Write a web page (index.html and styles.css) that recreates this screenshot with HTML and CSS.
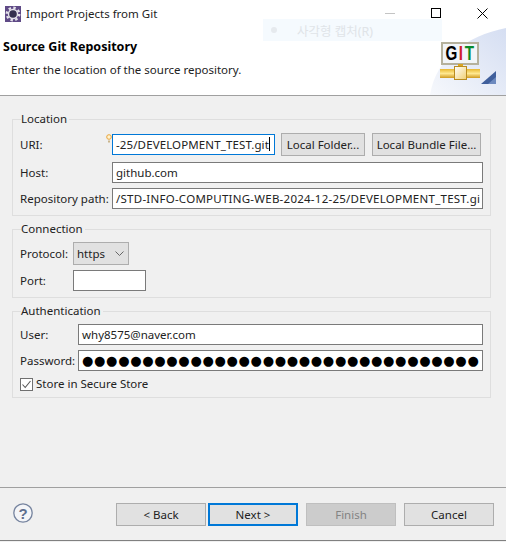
FILE: index.html
```html
<!DOCTYPE html>
<html lang="en">
<head>
    <meta charset="UTF-8">
    <title>Import Projects from Git</title>
    <link rel="stylesheet" href="styles.css">
</head>
<body>
    <div class="window">
        <div class="titlebar">
            <svg class="app-icon" width="16" height="16" viewBox="0 0 16 16">
                <rect width="16" height="16" fill="#5f4a86"/>
                <circle cx="8" cy="8" r="6.2" fill="none" stroke="#e4e2ea" stroke-width="2.4" stroke-dasharray="2.4 2.4"/>
                <circle cx="8" cy="8" r="5.2" fill="#e4e2ea"/>
                <circle cx="8" cy="8" r="3.8" fill="#35304f"/>
            </svg>
            <span class="title">Import Projects from Git</span>
            <div class="win-controls">
                <svg width="11" height="11" viewBox="0 0 11 11"><path d="M0 5.5H10" stroke="#c4c4c4"/></svg>
                <svg width="11" height="11" viewBox="0 0 11 11"><rect x=".5" y=".5" width="9" height="9" fill="none" stroke="#000"/></svg>
                <svg width="11" height="11" viewBox="0 0 11 11"><path d="M.5 .5L10.500 10.500M10.500 .5L.5 10.500" stroke="#000"/></svg>
            </div>
            <div class="capture-hint">
                <span class="capture-dot"></span>
                <span class="capture-label">사각형 캡처(R)</span>
            </div>
        </div>

        <div class="banner">
            <svg class="banner-art" width="80" height="67" viewBox="0 0 80 67">
                <defs>
                    <linearGradient id="sweep" x1="0" y1="1" x2="1" y2="0">
                        <stop offset="0" stop-color="#f6f8fc"/>
                        <stop offset="1" stop-color="#d5def2"/>
                    </linearGradient>
                    <linearGradient id="pipe" x1="0" y1="0" x2="0" y2="1">
                        <stop offset="0" stop-color="#e8b830"/>
                        <stop offset=".5" stop-color="#ffe890"/>
                        <stop offset="1" stop-color="#d09a20"/>
                    </linearGradient>
                    <linearGradient id="joint" x1="0" y1="0" x2="1" y2="1">
                        <stop offset="0" stop-color="#ffffff"/>
                        <stop offset="1" stop-color="#f0cf70"/>
                    </linearGradient>
                </defs>
                <path d="M4 67C10 30 40 8 80 0V67Z" fill="url(#sweep)"/>
                <rect x="16" y="15" width="36" height="21" fill="#f2f5f8" stroke="#b5b19c" stroke-width="2"/>
                <text class="git-text" transform="scale(.76 1)" y="32.500"><tspan x="25.700" fill="#000">G</tspan><tspan x="43.200" fill="#d0202a">I</tspan><tspan x="51" fill="#0a8a2a">T</tspan></text>
                <rect x="32" y="36" width="5" height="3" fill="#d9a520"/>
                <rect x="14" y="41" width="40" height="9" fill="url(#pipe)"/>
                <rect x="28.500" y="38.500" width="12" height="13" fill="url(#joint)" stroke="#b98c20"/>
                <path d="M55 56L70 43V56Z" fill="#3f5f9c"/>
                <path d="M62 56L70 49V56Z" fill="#6d8abf"/>
            </svg>
            <h1>Source Git Repository</h1>
            <p>Enter the location of the source repository.</p>
        </div>

        <div class="content">
            <fieldset class="location">
                <legend>Location</legend>
                <div class="row uri-row">
                    <label class="label-wide">URI:</label>
                    <span class="hint-bulb">
                        <svg width="6" height="9" viewBox="0 0 6 9"><circle cx="3" cy="3" r="2.300" fill="#fff3d0" stroke="#e8a33a"/><path d="M2 6.500H4V8.500H2Z" fill="#c9b48a"/></svg>
                    </span>
                    <div class="field focused uri-field">-25/DEVELOPMENT_TEST.git<span class="caret"></span></div>
                    <button class="btn folder-btn">Local Folder...</button>
                    <button class="btn bundle-btn">Local Bundle File...</button>
                </div>
                <div class="row host-row">
                    <label class="label-wide">Host:</label>
                    <div class="field grow">github.com</div>
                </div>
                <div class="row">
                    <label class="label-wide">Repository path:</label>
                    <div class="field grow path-field">/STD-INFO-COMPUTING-WEB-2024-12-25/DEVELOPMENT_TEST.gi</div>
                </div>
            </fieldset>

            <fieldset class="connection">
                <legend>Connection</legend>
                <div class="row">
                    <label class="label-short">Protocol:</label>
                    <div class="select">https
                        <svg width="9" height="5" viewBox="0 0 9 5"><path d="M.5 .5L4.500 4.500L8.500 .5" fill="none" stroke="#666"/></svg>
                    </div>
                </div>
                <div class="row">
                    <label class="label-short">Port:</label>
                    <div class="field port-field"></div>
                </div>
            </fieldset>

            <fieldset class="auth">
                <legend>Authentication</legend>
                <div class="row">
                    <label class="label-auth">User:</label>
                    <div class="field grow">why8575@naver.com</div>
                </div>
                <div class="row">
                    <label class="label-auth">Password:</label>
                    <div class="field grow dots">●●●●●●●●●●●●●●●●●●●●●●●●●●●●●●●●●</div>
                </div>
                <div class="check-row">
                    <svg width="13" height="13" viewBox="0 0 13 13"><rect x=".5" y=".5" width="12" height="12" fill="#fff" stroke="#707070"/><path d="M2.500 6.500L5.200 9.500L10.500 3" fill="none" stroke="#555" stroke-width="1.100"/></svg>
                    <span class="check-label">Store in Secure Store</span>
                </div>
            </fieldset>
        </div>

        <div class="footer">
            <svg class="help" width="20" height="20" viewBox="0 0 20 20">
                <circle cx="10" cy="10" r="9.200" fill="#f4f5f8" stroke="#76849f" stroke-width="1.300"/>
                <text class="help-mark" x="10" y="15.500">?</text>
            </svg>
            <div class="actions">
                <button class="btn wizard-btn">&lt; Back</button>
                <button class="btn wizard-btn default-btn">Next &gt;</button>
                <button class="btn wizard-btn finish-btn" disabled>Finish</button>
                <button class="btn wizard-btn">Cancel</button>
            </div>
        </div>
    </div>
</body>
</html>
```

FILE: styles.css
```css
body {
    margin: 0;
    font-family: "Noto Sans", "Noto Sans CJK KR", sans-serif;
    font-size: 11.5px;
    color: #000;
    background: #f0f0f0;
}

.window {
    width: 506px;
    height: 542px;
    display: flex;
    flex-direction: column;
    overflow: hidden;
}

/* title bar */
.titlebar {
    position: relative;
    z-index: 1;
    height: 28px;
    box-sizing: border-box;
    display: flex;
    align-items: center;
    padding: 0 0 1px 5px;
    background: #fff;
}

.app-icon {
    margin-right: 5px;
}

.title {
    flex: 1;
    color: #222;
}

.win-controls {
    display: flex;
    gap: 35px;
    padding-right: 18px;
}

.capture-hint {
    position: absolute;
    left: 263px;
    top: 19px;
    width: 179px;
    height: 22px;
    display: flex;
    align-items: center;
    background: #f5fafe;
}

.capture-dot {
    width: 6px;
    height: 6px;
    margin: 0 20px 0 8px;
    border-radius: 50%;
    background: #e6eaee;
}

.capture-label {
    font-size: 12.5px;
    color: #e0e4e8;
}

/* banner */
.banner {
    position: relative;
    height: 67px;
    background: #fff;
    border-bottom: 1px solid #a0a0a0;
}

.banner-art {
    position: absolute;
    right: 0;
    top: 0;
}

.git-text {
    font-family: "Liberation Sans", sans-serif;
    font-weight: bold;
    font-size: 20px;
}

.banner h1 {
    margin: 0;
    padding: 11px 0 0 3px;
    font-size: 12.5px;
    line-height: 16px;
    font-weight: bold;
}

.banner p {
    margin: 7px 0 0 11px;
    line-height: 16px;
    color: #222;
}

/* form groups */
.content {
    flex: 1;
    padding: 15px 15px 0 12px;
}

fieldset {
    min-width: 0;
    margin: 0 0 5px;
    padding: 0 7px 6px;
    border: 1px solid #dedede;
}

legend {
    margin-left: 1px;
    padding: 0 2px 0 0;
    line-height: 16px;
    color: #222;
}

.row {
    display: flex;
    align-items: center;
    margin-top: 5px;
    color: #222;
    white-space: nowrap;
}

.uri-row {
    position: relative;
    margin-top: 6px;
}

.host-row {
    margin-top: 6px;
}

.label-wide {
    width: 92px;
    flex: none;
}

.label-short {
    width: 53px;
    flex: none;
}

.label-auth {
    width: 58px;
    flex: none;
}

.hint-bulb {
    position: absolute;
    left: 86px;
    top: 1px;
    line-height: 0;
}

.field {
    height: 21px;
    box-sizing: border-box;
    padding: 0 3px;
    border: 1px solid #7a7a7a;
    background: #fff;
    line-height: 19px;
    color: #222;
    white-space: nowrap;
    overflow: hidden;
}

.grow {
    flex: 1;
    min-width: 0;
}

.uri-field {
    width: 163px;
    margin-right: 6px;
    letter-spacing: 0.12px;
}

.path-field {
    letter-spacing: 0.25px;
}

.focused {
    border-color: #0078d7;
}

.caret {
    display: inline-block;
    width: 1px;
    height: 14px;
    vertical-align: -2px;
    background: #000;
}

.port-field {
    width: 73px;
}

.dots {
    padding-left: 3px;
    padding-right: 0;
    font-family: "DejaVu Sans", sans-serif;
    font-size: 13px;
    letter-spacing: 0.7px;
    color: #000;
}

.btn {
    height: 23px;
    padding: 0;
    box-sizing: border-box;
    border: 1px solid #adadad;
    background: #e1e1e1;
    font: inherit;
    color: #222;
}

.folder-btn {
    width: 84px;
    margin-right: 7px;
}

.bundle-btn {
    width: 109px;
}

.select {
    width: 56px;
    height: 23px;
    box-sizing: border-box;
    padding: 0 4px 0 3px;
    display: flex;
    align-items: center;
    justify-content: space-between;
    border: 1px solid #adadad;
    background: #e1e1e1;
}

.check-row {
    display: flex;
    align-items: center;
    gap: 3px;
    margin-top: 7px;
    height: 13px;
    color: #222;
}

.check-label {
    margin-top: -2px;
}

/* footer */
.footer {
    height: 54px;
    box-sizing: border-box;
    display: flex;
    justify-content: space-between;
    padding: 15px 12px 0 13px;
    border-top: 1px solid #a0a0a0;
    border-bottom: 1px solid #808080;
    margin-bottom: 1px;
}

.help-mark {
    font-family: "Liberation Sans", sans-serif;
    font-size: 15px;
    font-weight: bold;
    fill: #5f6f8f;
    text-anchor: middle;
}

.actions {
    display: flex;
}

.wizard-btn {
    width: 90px;
    margin-left: 8px;
}

.wizard-btn:nth-child(2) {
    margin-left: 2px;
}

.default-btn {
    border: 2px solid #0078d7;
}

.finish-btn {
    background: #ccc;
    border-color: #bfbfbf;
    color: #838383;
}
```
